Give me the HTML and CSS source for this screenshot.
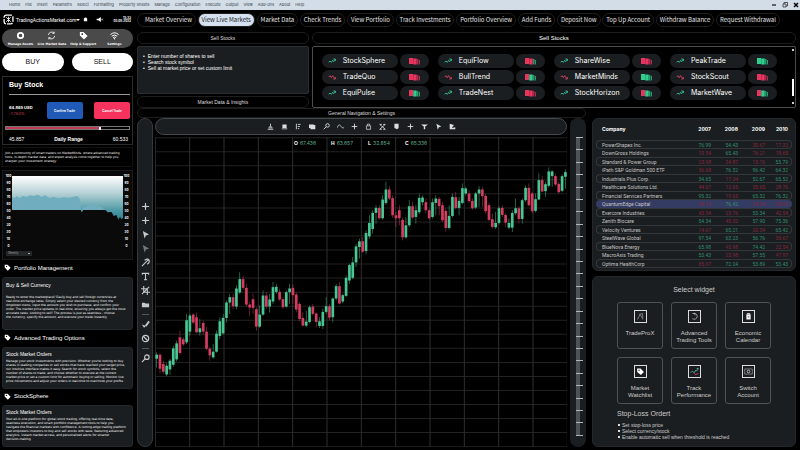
FILE: index.html
```
<!DOCTYPE html>
<html lang="en">
<head>
    <meta charset="UTF-8">
    <meta name="viewport" content="width=device-width, initial-scale=1.0">
    <title>TradingActionsMarket.com</title>
    <link rel="stylesheet" href="styles.css">
</head>
<body>
    <svg class="sprite" aria-hidden="true">
        <symbol id="i-tag" viewBox="0 0 10 10"><path d="M1 1h4l4.5 4.5-4 4L1 5z" fill="currentColor"/><circle cx="3.6" cy="3.4" r="1" fill="#222"/></symbol>
        <symbol id="i-up" viewBox="0 0 12 8"><path d="M1 6l2-2 2 2 2-3 1.500 2 2.500-4M8 1h3v3" fill="none" stroke="#35c794" stroke-width="1.300"/></symbol>
        <symbol id="i-down" viewBox="0 0 12 8"><path d="M1 4l2-2 2 3 2-3 1.500 2 2 2.500M8 7h3V4" fill="none" stroke="#e0446a" stroke-width="1.300"/></symbol>
        <symbol id="i-plus" viewBox="0 0 10 10"><path d="M5 1v8M1 5h8" stroke="currentColor" stroke-width="1.200"/><circle cx="5" cy="5" r="1.300" fill="currentColor"/></symbol>
        <symbol id="i-cursor" viewBox="0 0 10 10"><path d="M2 1l7 4-3.500 1L4 9.500z" fill="currentColor"/></symbol>
        <symbol id="i-line" viewBox="0 0 10 10"><path d="M1 9L8 2M4 2.500Q8 0 9 2.500T7 7" fill="none" stroke="currentColor" stroke-width="1.200"/></symbol>
        <symbol id="i-text" viewBox="0 0 10 10"><path d="M1.500 3V1.500h7V3M5 1.500v7M3.500 8.500h3" fill="none" stroke="currentColor" stroke-width="1.200"/></symbol>
        <symbol id="i-crop" viewBox="0 0 10 10"><path d="M3 0v7h7M0 3h7v7M1 9l8-8" fill="none" stroke="currentColor" stroke-width="1.200"/></symbol>
        <symbol id="i-folder" viewBox="0 0 10 10"><path d="M1 3h3l1 1h4v4H1z" fill="currentColor"/></symbol>
        <symbol id="i-brush" viewBox="0 0 10 10"><path d="M9 1.500L5 7" stroke="currentColor" stroke-width="2"/><path d="M1 5l4 1.500L3.500 9z" fill="currentColor"/></symbol>
        <symbol id="i-ban" viewBox="0 0 10 10"><g fill="none" stroke="currentColor" stroke-width="1.300"><circle cx="5" cy="5" r="3.500"/><path d="M2.500 2.500l5 5"/></g></symbol>
        <symbol id="i-zoom" viewBox="0 0 10 10"><g fill="none" stroke="currentColor" stroke-width="1.300"><circle cx="6.500" cy="3.500" r="2.500"/><path d="M4.500 5.500L1 9"/></g></symbol>
        <symbol id="i-stamp" viewBox="0 0 10 10"><path d="M5 1v4M2 7h6M3 5.500h4M1 9h8" stroke="currentColor" stroke-width="1.200"/></symbol>
        <symbol id="i-box" viewBox="0 0 10 10"><path d="M2 2h6v5H2zM1 8h8v1H1z" fill="currentColor"/></symbol>
        <symbol id="i-ruler" viewBox="0 0 10 10"><path d="M2 1v8M4 2h4M4 5h3M4 8h2" stroke="currentColor" stroke-width="1.200"/></symbol>
        <symbol id="i-cards" viewBox="0 0 10 10"><path d="M0 2h7v1h2v6H2V7H0z" fill="currentColor"/></symbol>
        <symbol id="i-wave" viewBox="0 0 10 10"><path d="M0 7Q3 0 5 4t5 3" fill="none" stroke="currentColor"/></symbol>
        <symbol id="i-lock" viewBox="0 0 10 10"><path d="M2 4h6v5H2zM3.500 4V1.500h3V4" fill="none" stroke="currentColor"/></symbol>
        <symbol id="i-x" viewBox="0 0 10 10"><path d="M1 2l8 7M9 2L1 9M1 2h3M6 2h3M1 9h3M6 9h3" stroke="currentColor" stroke-width="1.200"/></symbol>
        <symbol id="i-page" viewBox="0 0 10 10"><path d="M2 1h6v6L6 9 2 7z" fill="currentColor"/></symbol>
        <symbol id="i-tee" viewBox="0 0 10 10"><path d="M0 2h10L6 5v4H4V5z" fill="currentColor"/></symbol>
        <symbol id="i-corner" viewBox="0 0 10 10"><path d="M1 1v8h8V6L4 7l3-4z" fill="currentColor"/></symbol>
    </svg>

    <header class="menubar">
        <nav class="menu">
            <a href="#">Home</a><a href="#">File</a><a href="#">Insert</a><a href="#">Parametrs</a><a href="#">Select</a><a href="#">Formatting</a><a href="#">Property Sheets</a><a href="#">Manage</a><a href="#">Configuration</a><a href="#">Execute</a><a href="#">Output</a><a href="#">View</a><a href="#">Add-ons</a><a href="#">About</a><a href="#">Help</a>
        </nav>
        <div class="window-buttons">
            <button aria-label="Minimize"><svg viewBox="0 0 6 6"><path d="M1 3h4" stroke="#111" stroke-width="1.200"/></svg></button>
            <button aria-label="Restore"><svg viewBox="0 0 6 6"><path d="M1 2h3v3H1zM2 2V.5h3.500V4H4" fill="none" stroke="#333" stroke-width=".8"/></svg></button>
            <button aria-label="Close"><svg viewBox="0 0 6 6"><path d="M1 1l4 4M5 1L1 5" stroke="#000" stroke-width="1.500"/></svg></button>
        </div>
    </header>

    <div class="app">
        <aside class="sidebar">
            <div class="brand">
                <svg class="logo" viewBox="0 0 10 10"><rect x="1" y="1" width="8" height="8" rx="2" fill="none" stroke="#fff" stroke-width="1.200" stroke-dasharray="5 1"/><path d="M3 3l4 4M7 3L3 7M5 2.500v5" stroke="#fff" stroke-width=".8"/></svg>
                <a class="brand-name" href="#">TradingActionsMarket.com</a>
                <svg class="caret" viewBox="0 0 4 4"><path d="M0 1h4L2 3z" fill="#fff"/></svg>
                <svg class="bell" viewBox="0 0 6 6"><path d="M1 5V2Q3-1 5 2v3z" fill="#fff"/></svg>
                <svg class="mute" viewBox="0 0 8 6"><path d="M0 2h2l3-2v6L2 4H0z" fill="#fff"/><path d="M5.500 2l2 2M7.500 2l-2 2" stroke="#fff" stroke-width=".7"/></svg>
                <div class="clock">15:23<br>05.08.2023</div>
            </div>

            <nav class="quick">
                <a href="#"><svg viewBox="0 0 10 10"><circle cx="5" cy="5" r="3" fill="none" stroke="#fff" stroke-width="2"/></svg>Manage Assets</a>
                <a href="#"><svg viewBox="0 0 10 10"><path d="M1.500 4.500A3.700 3.700 0 0 1 8 2.500V.8M8.500 5.500A3.700 3.700 0 0 1 2 7.500v1.800M8 2.600H6M2 7.400h2" fill="none" stroke="#fff" stroke-width=".9"/></svg>Live Market Data</a>
                <a href="#"><svg><use href="#i-tag"/></svg>Help &amp; Support</a>
                <a href="#"><svg viewBox="0 0 10 10"><path d="M.5 4Q5 0 9.500 4M2 5.700q3-2.500 6 0M3.500 7.300q1.500-1.200 3 0" fill="none" stroke="#fff" stroke-width="1.100"/><circle cx="5" cy="8.700" r=".8" fill="#fff"/></svg>Settings</a>
            </nav>

            <div class="trade-buttons">
                <button>BUY</button>
                <button>SELL</button>
            </div>

            <section class="buy-card">
                <h2>Buy Stock</h2>
                <div class="buy-row">
                    <div class="quote">64.865 USD<span>-7.763%</span></div>
                    <button class="confirm">Confirm Trade</button>
                    <button class="cancel">Cancel Trade</button>
                </div>
                <input type="range" id="dailyRange" min="0" max="100" value="77">
                <div class="range-row"><span>45.857</span><label for="dailyRange">Daily Range</label><span>60.533</span></div>
            </section>

            <p class="join">Join a community of smart traders on MarketMinds, where advanced trading<br>tools, in-depth market data, and expert analysis come together to help you<br>sharpen your investment strategy.</p>

            <section class="area-card">
                <div class="area-plot">
                    <div class="axis"></div>
                    <svg viewBox="0 0 337 210" preserveAspectRatio="none">
                        <defs><linearGradient id="sky" x1="0" y1="0" x2="0" y2="1"><stop offset="0" stop-color="#fff"/><stop offset=".4" stop-color="#b4d0d5"/><stop offset=".8" stop-color="#4b98a4"/><stop offset="1" stop-color="#317f8e"/></linearGradient></defs>
                        <path d="M0 0H337V126L332 130 328 122 323 131 317 117 309 120 302 108 290 109 284 102H216L212 109 209 102H0z" fill="url(#sky)"/>
                        <path d="M0 102V64L8 66 14 61 24 66 32 60 44 62 56 58 66 60 78 56 90 63 100 58 114 66 126 62 140 67 158 64 174 65 186 62 198 60 205 66 208 86 211 107 214 94 224 92 230 86 240 88 252 85 260 88 270 93 282 101z" fill="#70aebf"/>
                    </svg>
                    <div class="axis"></div>
                </div>
                <select aria-label="Period"><option>Weekly</option><option>Monthly</option></select>
            </section>

            <h3 class="topic"><svg><use href="#i-tag"/></svg>Portfolio Management</h3>
            <section class="note">
                <h4>Buy &amp; Sell Currency</h4>
                <p>Ready to enter the marketplace? Easily buy and sell foreign currencies at<br>real-time exchange rates. Simply select your desired currency from the<br>dropdown menu, input the amount you wish to purchase, and confirm your<br>order. The market price updates in real-time, ensuring you always get the most<br>accurate rates. Looking to sell? The process is just as seamless - choose<br>the currency, specify the amount, and execute your trade instantly.</p>
            </section>

            <h3 class="topic"><svg><use href="#i-tag"/></svg>Advanced Trading Options</h3>
            <section class="note short">
                <h4>Stock Market Orders</h4>
                <p>Manage your stock investments with precision. Whether you're looking to buy<br>shares in leading companies or sell stocks that have reached your target price,<br>our intuitive interface makes it easy. Search for stock symbols, select the<br>number of shares to trade, and choose whether to execute at the current<br>market price or set a custom limit for automatic buying or selling. Monitor live<br>price movements and adjust your orders in real-time to maximize your profits</p>
            </section>

            <h3 class="topic"><svg><use href="#i-tag"/></svg>StockSphere</h3>
            <section class="note short">
                <h4>Stock Market Orders</h4>
                <p>Your all-in-one platform for global stock trading, offering real-time data,<br>seamless execution, and smart portfolio management tools to help you<br>navigate the financial markets with confidence. A cutting-edge trading platform<br>that empowers investors to buy and sell stocks with ease, featuring advanced<br>analytics, instant market access, and personalized alerts for smarter<br>decision-making.</p>
            </section>
        </aside>

        <main class="workspace">
            <nav class="tabs">
                <a href="#">Market Overview</a>
                <a href="#" class="active">View Live Markets</a>
                <a href="#">Market Data</a>
                <a href="#">Check Trends</a>
                <a href="#">View Portfolio</a>
                <a href="#">Track Investments</a>
                <a href="#">Portfolio Overview</a>
                <a href="#">Add Funds</a>
                <a href="#">Deposit Now</a>
                <a href="#">Top Up Account</a>
                <a href="#">Withdraw Balance</a>
                <a href="#">Request Withdrawal</a>
            </nav>

            <div class="upper">
                <section class="sell-info">
                    <h2 class="bar">Sell Stocks</h2>
                    <ul>
                        <li>Enter number of shares to sell</li>
                        <li>Search stock symbol</li>
                        <li>Sell at market price or set custom limit</li>
                    </ul>
                    <h2 class="bar">Market Data &amp; Insights</h2>
                </section>
                <section class="sell-list">
                    <h2 class="bar large">Sell Stocks</h2>
                    <div class="stock-box">
                        <div class="stocks" id="stocks"></div>
                        <div class="scroll"><i></i><b></b><i></i></div>
                    </div>
                </section>
            </div>

            <div class="lower">
                <section class="charting">
                    <h2 class="bar slim">General Navigation &amp; Settings</h2>
                    <div class="chart-row">
                        <div class="tools">
                            <button aria-label="Add"><svg><use href="#i-plus"/></svg></button>
                            <button aria-label="Crosshair"><svg><use href="#i-plus"/></svg></button>
                            <button aria-label="Pointer"><svg><use href="#i-cursor"/></svg></button>
                            <button aria-label="Select" class="dim"><svg><use href="#i-cursor"/></svg></button>
                            <button aria-label="Trend line"><svg><use href="#i-line"/></svg></button>
                            <button aria-label="Text"><svg><use href="#i-text"/></svg></button>
                            <button aria-label="Crop"><svg><use href="#i-crop"/></svg></button>
                            <button aria-label="Folder"><svg><use href="#i-folder"/></svg></button>
                            <hr>
                            <button aria-label="Brush"><svg><use href="#i-brush"/></svg></button>
                            <button aria-label="Clear"><svg><use href="#i-ban"/></svg></button>
                            <hr>
                            <button aria-label="Zoom"><svg><use href="#i-zoom"/></svg></button>
                        </div>
                        <div class="chart-main">
                            <div class="toolbar" id="toolbar"></div>
                            <div class="plot">
                                <svg id="candles" viewBox="0 0 1236 927" preserveAspectRatio="none"></svg>
                                <dl class="ohlc">
                                    <div><dt>O</dt><dd>67.436</dd></div>
                                    <div><dt>H</dt><dd>63.657</dd></div>
                                    <div><dt>L</dt><dd>32.654</dd></div>
                                    <div><dt>C</dt><dd>65.336</dd></div>
                                </dl>
                            </div>
                        </div>
                        <div class="ruler"><div class="ticks" id="ticks"></div></div>
                    </div>
                </section>

                <section class="side">
                    <div class="panel company">
                        <table>
                            <thead><tr><th>Company</th><th>2007</th><th>2008</th><th>2009</th><th>2010</th></tr></thead>
                            <tbody id="companies"></tbody>
                        </table>
                    </div>
                    <div class="panel widgets">
                        <h2>Select widget</h2>
                        <div class="widget-grid">
                            <button><svg viewBox="0 0 13 13"><path d="M3 10L6 4l3 5M5 4l4-1v7" fill="none" stroke="#888"/></svg>TradeProX</button>
                            <button><svg viewBox="0 0 13 13"><path d="M5 3a3.500 3.500 0 1 1-1 6M4 3h3v2" fill="none" stroke="#ccc" stroke-width=".8"/></svg>Advanced<br>Trading Tools</button>
                            <button><svg viewBox="0 0 13 13"><path d="M4 4h5v6H4z" fill="#fff"/><path d="M5 4V3h3v1" fill="none" stroke="#fff"/><path d="M5.500 7h2" stroke="#333"/></svg>Economic<br>Calendar</button>
                            <button><svg viewBox="0 0 13 13"><path d="M2.500 3h4l4 4-3.500 3.500L2.500 7z" fill="#fff"/><circle cx="4.800" cy="5" r=".8" fill="#222"/></svg>Market<br>Watchlist</button>
                            <button><svg viewBox="0 0 13 13"><path d="M2 8l2-2 2 2 2-3 1 1 2-3M9 3h2" fill="none" stroke="#5fb99c"/><path d="M6 9l2 1 3-1" fill="none" stroke="#e0446a"/></svg>Track<br>Performance</button>
                            <button><svg viewBox="0 0 13 13"><path d="M2 3.500h9v6H2z" fill="none" stroke="#888"/><circle cx="6.500" cy="6.500" r="1.600" fill="none" stroke="#ccc"/></svg>Switch<br>Account</button>
                        </div>
                        <div class="stop-loss">
                            <h3>Stop-Loss Ordert</h3>
                            <ul>
                                <li>Set stop-loss price</li>
                                <li>Select currency/stock</li>
                                <li>Enable automatic sell when threshold is reached</li>
                            </ul>
                        </div>
                    </div>
                </section>
            </div>
        </main>
    </div>
    <script src="script.js"></script>
</body>
</html>
```
FILE: styles.css
```
* { box-sizing: border-box; margin: 0; padding: 0; }
body {
    min-height: 100vh;
    display: flex;
    flex-direction: column;
    background: #000;
    color: #fff;
    font-family: "Liberation Sans", Arial, sans-serif;
    font-size: 5px;
    line-height: 6px;
}
a { color: inherit; text-decoration: none; }
button { border: 0; background: none; color: inherit; font: inherit; cursor: pointer; }
ul { list-style: none; }
h2, h3, h4 { font-weight: normal; }
svg { display: block; flex: none; }
.sprite { position: absolute; width: 0; height: 0; }

/* top menu */
.menubar { height: 10px; display: flex; justify-content: space-between; align-items: center; padding: 0 1px 0 9px; background: #d3dde8; }
.menu { display: flex; gap: 5px; font-family: Inter, sans-serif; font-size: 4px; color: #333a44; white-space: nowrap; }
.window-buttons { display: flex; gap: 5px; }
.window-buttons svg { width: 6px; height: 6px; }

.app { flex: 1; display: flex; gap: 4px; padding: 0 4px 3px 2px; }

/* sidebar */
.sidebar { flex: none; width: 131px; display: flex; flex-direction: column; }
.brand { height: 19px; display: flex; align-items: center; padding: 0 2px 0 1px; }
.logo { width: 11px; height: 11px; margin-right: 2px; }
.caret { width: 4px; height: 4px; }
.bell { width: 5px; height: 5px; margin-left: auto; }
.mute { width: 8px; height: 5px; margin: 0 10px 0 8px; }
.clock { font-family: Inter, sans-serif; font-size: 3px; line-height: 3px; font-weight: bold; text-align: right; }
.brand-name { font-family: Roboto, sans-serif; }
.quick { height: 19px; display: grid; grid-template-columns: repeat(4, 1fr); border-radius: 10px; padding: 0 3px; background: #4a4a4b; }
.quick a { display: flex; flex-direction: column; align-items: center; padding-top: 2px; font-family: "DejaVu Sans", sans-serif; font-size: 3px; line-height: 4px; font-weight: bold; white-space: nowrap; }
.quick svg { width: 9px; height: 9px; margin-bottom: 2px; }
.trade-buttons { display: grid; grid-template-columns: 1fr 1fr; gap: 8px; margin: 5px 0; }
.trade-buttons button { height: 18px; border-radius: 9px; background: #fff; color: #111; font-size: 7px; }
.buy-card { height: 69px; border: 1px solid #2c2c2c; padding: 4px 2px 0; }
.buy-card h2 { margin: 0 0 0 4px; height: 14px; border-bottom: 1px solid #999; font-size: 7px; line-height: 8px; font-weight: bold; }
.buy-row { display: flex; align-items: center; justify-content: space-between; margin: 7px 0 7px 4px; font-family: Inter, sans-serif; }
.quote { width: 26px; font-size: 4px; font-weight: bold; white-space: nowrap; }
.quote span { display: block; color: #d8405f; font-weight: normal; }
.buy-row button { width: 36px; height: 17px; border-radius: 2px; font-size: 3px; font-weight: bold; }
.confirm { background: #2159b6; }
.cancel { background: #f5335e; }
.buy-card input { display: block; appearance: none; width: 100%; height: 4px; border: 1px solid #777; background: linear-gradient(90deg, #c23c57 77%, #000 77%); }
.buy-card input::-webkit-slider-thumb { appearance: none; width: 2px; height: 3px; background: #fff; }
.range-row { display: flex; justify-content: space-between; margin: 6px 2px 0 4px; line-height: 6px; }
.range-row label { font-weight: bold; }
.join { height: 20px; margin: 2px 0 3px; border: 1px solid #121212; padding: 3px 2px; }
.join, .note p { font-family: "DejaVu Sans", sans-serif; font-size: 3px; line-height: 4px; white-space: nowrap; }
.area-card { height: 90px; border: 1px solid #1b1b1b; background: #0a0a0a; padding: 3px 2px; display: flex; flex-direction: column; }
.area-plot { display: flex; }
.area-plot svg { flex: 1; min-width: 0; height: 70px; margin-top: 2px; }
.axis { width: 7px; height: 74px; display: flex; flex-direction: column; justify-content: space-between; text-align: center; font-family: Inter, sans-serif; font-size: 3px; line-height: 4px; font-weight: bold; }
.area-card select { appearance: none; width: 26px; height: 5px; margin: auto 0 0 1px; border: 0; padding: 0 2px; background: #242628 linear-gradient(#aaa, #aaa) 22px 2px / 2px 1px no-repeat; color: #999; font: 3px/5px Inter, sans-serif; }
.topic { height: 17px; display: flex; align-items: center; gap: 3px; padding: 0 0 2px 2px; font-size: 6px; }
.topic svg { width: 7px; height: 7px; }
.note { height: 53px; border-radius: 3px; background: #1b1e20; border: 1px solid #25282a; padding: 4px 3px; }
.note h4 { margin-bottom: 7px; }
.note.short { height: 42px; padding: 3px; }
.note.short h4 { margin-bottom: 2px; }
.note.short + .topic { height: 16px; }

/* workspace */
.workspace { flex: 1; min-width: 0; display: flex; flex-direction: column; }
.tabs { display: flex; justify-content: space-between; margin: 3px 16px 5px 0; }
.tabs a { height: 14px; border: 1px solid #1f1f1f; border-radius: 7px; padding: 0 3px; font: 6px/12px "Noto Sans CJK SC", sans-serif; color: #e4e4e4; white-space: nowrap; }
.tabs a:first-child { padding: 0 3px 0 7px; }
.tabs .active { background: #d5e0f0; color: #222; }
.upper { display: grid; grid-template-columns: 172fr 485fr; gap: 3px; height: 76px; }
.upper section { display: flex; flex-direction: column; min-width: 0; }
.bar { height: 12px; border: 1px solid #1d1d1d; border-radius: 6px; text-align: center; line-height: 10px; font-size: 5px; color: #ddd; }
.bar.large { font-size: 6px; color: #fff; }
.bar.slim { height: 10px; line-height: 8px; }
.sell-info ul { flex: 1; margin: 2px 0; border: 1px solid #2b2e30; border-radius: 2px; background: #1b1e20; padding: 6px 5px; }
.sell-info li::before { content: "•"; margin-right: 3px; }
.stock-box { flex: 1; display: flex; justify-content: space-between; margin-top: 2px; border: 1px solid #4a4c4d; border-radius: 2px; padding: 7px 1px 3px 9px; }
.stocks { flex: 1; display: grid; grid-template-columns: repeat(4, 1fr); grid-auto-rows: 14px; gap: 2px 9px; margin-right: 14px; }
.stock { display: flex; gap: 2px; min-width: 0; }
.stock a, .stock span { display: flex; align-items: center; border-radius: 7px; background: #1b1e20; }
.stock a { flex: 1; min-width: 0; gap: 7px; padding-left: 6px; font-family: Inter, sans-serif; font-size: 7px; }
.stock a svg { width: 8px; height: 6px; }
.stock span { width: 29px; justify-content: center; }
.stock span svg { width: 11px; height: 7px; }
.scroll { display: flex; flex-direction: column; justify-content: space-between; align-items: center; width: 3px; margin-top: -5px; }
.scroll i { width: 2px; height: 2px; background: #ccc; }
.scroll b { width: 2px; height: 17px; margin: auto 0 6px; background: #fff; }

.lower { flex: 1; display: grid; grid-template-columns: 449fr 204fr; gap: 6px; }
.charting { display: flex; flex-direction: column; min-width: 0; }
.chart-row { flex: 1; display: flex; }
.tools { width: 16px; display: flex; flex-direction: column; align-items: center; justify-content: center; gap: 5px; border: 1px solid #35383a; border-radius: 8px; background: #1b1e20; }
.tools button, .tools svg { width: 9px; height: 9px; }
.tools button { color: #c8c8c8; }
.tools .dim { color: #777; }
.tools hr { width: 7px; border: 0; border-top: 1px solid #555; }
.chart-main { flex: 1; min-width: 0; display: flex; flex-direction: column; gap: 2px; margin: 0 3px 0 2px; }
.toolbar { height: 17px; display: flex; align-items: center; justify-content: center; gap: 7px; border: 1px solid #46494b; border-radius: 9px; background: #1b1e20; color: #ddd; }
.toolbar svg, .toolbar button { width: 7px; height: 7px; }
.plot { flex: 1; position: relative; }
.plot > svg { position: absolute; width: 100%; height: 100%; }
.grid-h { stroke: #222; stroke-width: 3; }
.grid-v { stroke: #2e2e2e; stroke-width: 3; }
.up { fill: #48c795; }
.down { fill: #d53e61; }
.ohlc { position: absolute; top: 3px; left: 138px; display: flex; }
.ohlc div { display: flex; gap: 2px; width: 37px; padding-left: 1px; }
.ohlc dt { font-weight: bold; }
.ohlc dd { color: #5fae8c; font-family: Inter, sans-serif; }
.ruler { width: 16px; border-radius: 8px; background: #1b1e20; padding: 19px 3px 11px 6px; display: flex; }
.ticks { flex: 1; display: flex; flex-direction: column; justify-content: space-between; background: linear-gradient(#505355, #505355) left / 4px 100% no-repeat; }
.ticks i { height: 1px; background: #b4b6b7; }

.side { display: flex; flex-direction: column; gap: 5px; min-width: 0; padding-top: 10px; }
.panel { border: 1px solid #25282a; border-radius: 6px; background: #1b1e20; }
.company { height: 153px; padding: 3px; }
.company table { width: 100%; border-collapse: separate; border-spacing: 0; table-layout: fixed; font-family: Roboto, sans-serif; color: #c4c4c4; }
.company th { height: 18px; padding-bottom: 4px; text-align: right; font-family: Inter, sans-serif; color: #fff; }
.company th:first-child, .company td:first-child { width: 88px; padding-left: 6px; text-align: left; white-space: nowrap; }
.company th:last-child, .company td:last-child { padding-right: 4px; }
.company td { height: 8px; line-height: 6px; text-align: right; }
.company tbody tr:nth-child(odd) td { height: 9px; border: solid #34373a; border-width: 1px 0; }
.company tbody tr:nth-child(odd) td:first-child { border-left-width: 1px; border-radius: 4px 0 0 4px; padding-left: 5px; }
.company tbody tr:nth-child(odd) td:last-child { border-right-width: 1px; border-radius: 0 4px 4px 0; padding-right: 3px; }
.company .selected td { background: #353c64; }
.company .selected td:first-child { border-radius: 4px 0 0 4px; }
.company .selected td:last-child { border-radius: 0 4px 4px 0; }
.gain { color: #2e8f6c; }
.loss { color: #84263d; }

.widgets { flex: 1; padding: 9px 24px 0; color: #ccc; }
.widgets h2 { text-align: center; font-size: 7px; line-height: 8px; }
.widget-grid { display: grid; grid-template-columns: repeat(3, 1fr); gap: 8px; margin-top: 8px; }
.widget-grid button { height: 47px; display: flex; flex-direction: column; align-items: center; border: 1px solid #4f5254; border-radius: 3px; padding-top: 7px; font-size: 6px; line-height: 7px; }
.widget-grid svg { width: 13px; height: 13px; margin-bottom: 7px; border: 1px solid #ddd; }
.stop-loss { margin-top: 6px; }
.stop-loss h3 { font-size: 7px; line-height: 8px; margin-bottom: 4px; }
.stop-loss li { padding-left: 5px; white-space: nowrap; position: relative; }
.stop-loss li::before { content: ""; position: absolute; left: 1px; top: 2px; width: 2px; height: 2px; background: #ddd; }
```
FILE: script.js
```
const UP = "#2fd08f", DOWN = "#e8345f";

// name, trend, bar colours
const stocks = [
    ["StockSphere", "up", "rrr"], ["EquiFlow", "up", "rrg"], ["ShareWise", "up", "rrr"], ["PeakTrade", "up", "ggg"],
    ["TradeQuo", "down", "rrr"], ["BullTrend", "down", "rgg"], ["MarketMinds", "down", "ggg"], ["StockScout", "down", "rrr"],
    ["EquiPulse", "up", "rgg"], ["TradeNest", "up", "rrr"], ["StockHorizon", "up", "rgg"], ["MarketWave", "up", "rgg"]
];

document.getElementById("stocks").innerHTML = stocks.map(([name, trend, bars]) => {
    const c = [...bars].map(b => b === "g" ? UP : DOWN);
    return `<div class="stock"><a href="#"><svg><use href="#i-${trend}"/></svg>${name}</a>
        <span><svg viewBox="0 0 11 7"><rect width="4" height="6" fill="${c[0]}"/><rect x="4.2" y=".5" width="3.500" height="6" fill="${c[1]}"/>
        <g fill="${c[2]}" opacity=".7"><rect x="8" y="1" width="1.500" height="5.500"/><rect x="10" y="2" width="1" height="4.500"/></g></svg></span></div>`;
}).join("");

const icons = ["stamp", "box", "ruler", "cards", "zoom", "wave", "plus", "lock", "x", "page", "plus", "tee", "cursor", "corner"];
document.getElementById("toolbar").innerHTML = icons.map(i =>
    `<button aria-label="${i}"><svg><use href="#i-${i}"/></svg></button>`).join("");

// a minus marks a falling value
const companies = [
    ["PowerShapes Inc.", "76.99", "54.43", "-30.67", "-17.32"],
    ["DownGross Holdings", "-10.54", "65.43", "-76.21", "-18.65"],
    ["Standard & Power Group", "-23.98", "-34.87", "-15.76", "53.79"],
    ["iPath S&P Goldman 500 ETF", "-36.68", "76.32", "96.42", "64.32"],
    ["Industrials Plus Corp.", "34.65", "-17.34", "52.67", "65.52"],
    ["Healthcare Solutions Ltd.", "-44.67", "-12.65", "-35.65", "-28.76"],
    ["Financial Services Partners", "95.32", "-19.65", "65.32", "76.32"],
    ["QuantumEdge Capital", "-46.12", "76.42", "-23.54", "-30.65"],
    ["Evercore Industries", "-43.54", "-23.76", "53.34", "-42.54"],
    ["Zenith Biocare", "54.34", "-45.32", "57.90", "75.36"],
    ["Velocity Ventures", "-14.67", "65.21", "-32.54", "65.42"],
    ["SteelWave Global", "97.54", "63.23", "56.76", "-35.67"],
    ["BlueNova Energy", "65.98", "-43.98", "74.42", "-22.54"],
    ["MacroAxis Trading", "53.43", "-23.98", "57.55", "-47.97"],
    ["Optima HealthCorp", "-85.97", "72.24", "53.89", "53.43"]
];
document.getElementById("companies").innerHTML = companies.map(([name, ...values]) =>
    `<tr${name.startsWith("Quantum") ? ' class="selected"' : ""}><td>${name.replace("&", "&amp;")}</td>` +
    values.map(v => `<td class="${v[0] === "-" ? "loss" : "gain"}">${v.replace("-", "")}</td>`).join("") + "</tr>").join("");

document.querySelectorAll(".axis").forEach(axis => {
    for (let v = 100; v >= 0; v -= 10) axis.innerHTML += `<span>${v}</span>`;
});
document.getElementById("ticks").innerHTML = "<i></i>".repeat(25);

// direction, high, body top, body bottom, low
const candles = `u 665 672 684 710|d 668 672 714 728|d 690 700 723 728|u 698 705 731 736|u 685 690 716 732|u 645 653 702 708|u 630 638 686 692|d 600 620 667 672
d 620 626 641 646|u 550 569 635 640|u 550 555 603 615|d 548 552 576 580|d 546 560 605 608|u 565 593 605 615|d 570 577 603 612|d 590 603 654 658
d 648 654 674 690|u 640 663 680 684|u 600 609 663 666|u 560 572 616 626|u 550 562 608 612|u 510 516 562 576|u 490 500 516 550|d 490 500 527 536
u 465 474 528 536|u 425 446 486 490|d 436 446 472 478|d 460 472 522 528|d 515 522 531 556|d 490 506 532 550|d 530 536 588 600|u 525 552 588 592
u 480 495 552 556|d 485 495 528 534|u 490 507 528 546|u 455 470 513 520|u 460 469 484 490|d 475 484 507 512|d 500 506 530 534|u 480 485 528 532
u 460 474 485 520|d 462 472 494 520|d 485 492 537 545|d 515 520 565 572|d 545 562 585 588|u 540 573 585 590|u 525 530 574 578|d 520 528 550 555
d 545 549 574 590|u 560 572 586 592|u 535 544 586 595|u 500 527 544 550|d 520 527 561 570|u 500 504 560 575|u 460 467 504 510|d 455 467 519 522
u 490 494 513 518|u 435 442 496 500|u 400 404 450 460|u 380 396 442 446|u 340 348 396 410|u 325 333 350 384|d 320 333 364 368|u 300 308 362 372
u 255 278 318 325|u 240 248 296 310|u 225 233 248 280|d 225 233 264 268|u 195 208 264 268|u 155 178 218 224|d 168 178 205 210|d 195 204 255 262
d 245 255 264 290|d 225 240 264 285|d 262 269 321 330|u 260 285 321 325|u 210 228 285 290|d 215 228 262 266|u 225 240 260 280|u 190 203 246 252
u 195 202 216 225|d 205 216 240 250|d 235 240 264 268|u 205 216 260 265|u 195 205 218 255|d 200 206 228 255|d 215 225 270 275|d 235 242 293 304
u 225 257 293 298|u 190 200 257 262|d 185 201 233 238|u 200 212 233 255|u 160 174 218 222|u 170 175 190 195|d 180 190 213 218|d 205 212 234 238
u 185 190 232 236|u 168 178 190 230|d 170 178 198 230|d 190 197 243 250|d 218 225 269 272|d 250 267 290 294|u 245 278 291 296|u 228 234 278 282
d 225 233 254 260|d 250 254 277 290|u 265 278 292 297|u 240 248 292 305|u 205 234 249 255|d 228 234 266 280|u 205 210 266 280|u 165 173 210 215
d 160 173 225 228|d 185 190 243 250|u 190 207 242 246|u 130 150 208 210|d 138 150 184 186|u 155 162 183 200|u 112 124 167 172|u 120 124 138 170
d 130 138 163 168|d 155 161 186 190|u 132 138 182 186|u 118 126 140 175`.split(/[|\n]/);

let chart = "";
for (let i = 0; i <= 22; i++) chart += `<path class="grid-h" d="M0 ${2 + i * 42}H1236"/>`;
for (let i = 0; i <= 12; i++) chart += `<path class="grid-v" d="M${1 + i * 103} 0V927"/>`;
candles.forEach((row, i) => {
    const [dir, high, top, bottom, low] = row.trim().split(" ");
    const x = 5 + i * 9.97, y = v => v - 21;
    chart += `<g class="${dir === "u" ? "up" : "down"}"><rect x="${x - 1}" y="${y(high)}" width="2" height="${low - high}" opacity=".7"/>
        <rect x="${x - 4}" y="${y(top)}" width="8" height="${bottom - top}"/></g>`;
});
document.getElementById("candles").innerHTML = chart;
```
